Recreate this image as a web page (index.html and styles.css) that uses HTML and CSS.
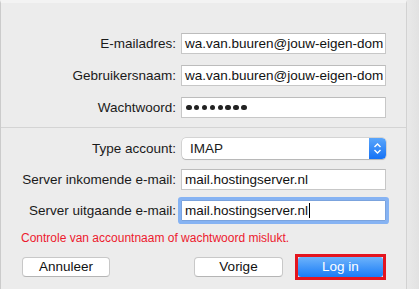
FILE: index.html
```html
<!DOCTYPE html>
<html lang="nl">
<head>
<meta charset="utf-8">
<link rel="stylesheet" href="styles.css">
</head>
<body>
<div class="window">
  <div class="panel">
    <div class="section first">
      <div class="row">
        <div class="label">E-mailadres:</div>
        <div class="field">wa.van.buuren@jouw-eigen-dom</div>
      </div>
      <div class="row">
        <div class="label">Gebruikersnaam:</div>
        <div class="field">wa.van.buuren@jouw-eigen-dom</div>
      </div>
      <div class="row">
        <div class="label">Wachtwoord:</div>
        <div class="field dots">
          <span class="dot"></span><span class="dot"></span><span class="dot"></span><span class="dot"></span><span class="dot"></span><span class="dot"></span><span class="dot"></span><span class="dot"></span>
        </div>
      </div>
    </div>
    <div class="separator"></div>
    <div class="section second">
      <div class="row">
        <div class="label">Type account:</div>
        <div class="select">
          <span class="select-text">IMAP</span>
          <span class="stepper">
            <svg width="9" height="13" viewBox="0 0 9 13"><path d="M1.5 5 L4.5 2 L7.5 5 M1.5 8 L4.5 11 L7.5 8" fill="none" stroke="#fff" stroke-width="1.4"/></svg>
          </span>
        </div>
      </div>
      <div class="row">
        <div class="label">Server inkomende e-mail:</div>
        <div class="field">mail.hostingserver.nl</div>
      </div>
      <div class="row">
        <div class="label">Server uitgaande e-mail:</div>
        <div class="field focused">mail.hostingserver.nl<span class="caret"></span></div>
      </div>
    </div>
    <div class="error">Controle van accountnaam of wachtwoord mislukt.</div>
    <div class="buttons">
      <div class="btn">Annuleer</div>
      <div class="right-group">
        <div class="btn vorige">Vorige</div>
        <div class="highlight"><div class="btn primary">Log in</div></div>
      </div>
    </div>
  </div>
  <div class="side"></div>
</div>
</body>
</html>
```

FILE: styles.css
```css
html, body {
  margin: 0;
  padding: 0;
}
body {
  width: 419px;
  height: 289px;
  overflow: hidden;
  background: #e4e4e4;
  font-family: "Liberation Sans", Arial, sans-serif;
  font-size: 13.5px;
  color: #1a1a1a;
}
.window {
  display: flex;
  height: 289px;
}
.panel {
  width: 407px;
  height: 289px;
  box-sizing: border-box;
  border-left: 1px solid #cbcbcb;
  border-right: 1px solid #d2d2d2;
  border-top: 3px solid #f3f3f3;
  background: #ececec;
  display: flex;
  flex-direction: column;
}
.side {
  flex: 1;
  background: linear-gradient(to right, #e9e9e9, #e2e2e2);
}
.section {
  display: flex;
  flex-direction: column;
}
.section.first {
  padding-top: 30px;
  gap: 11px;
}
.section.second {
  padding-top: 10px;
  gap: 10px;
}
.separator {
  height: 1px;
  background: #d4d4d4;
  margin-top: 9px;
}
.row {
  display: grid;
  grid-template-columns: 175px 205px;
  column-gap: 5px;
  align-items: center;
  height: 21px;
}
.label {
  text-align: right;
  white-space: nowrap;
}
.field {
  box-sizing: border-box;
  height: 21px;
  line-height: 19px;
  background: #fff;
  border: 1px solid #c7c7c7;
  border-top-color: #bcbcbc;
  padding: 0 0 0 3px;
  white-space: nowrap;
  overflow: hidden;
  color: #111;
}
.field.dots {
  display: flex;
  align-items: center;
  gap: 2.4px;
  padding-left: 4px;
}
.dot {
  width: 5.5px;
  height: 5.5px;
  border-radius: 50%;
  background: #222;
}
.field.focused {
  box-shadow: 0 0 0 3px #86b3f3;
  border-radius: 1px;
  border-color: #7ba3dd;
  display: flex;
  align-items: center;
}
.caret {
  display: inline-block;
  width: 1px;
  height: 15px;
  background: #000;
  margin-left: 1px;
}
.select {
  box-sizing: border-box;
  height: 21px;
  margin-left: 1px;
  background: #fff;
  border-radius: 4px;
  box-shadow: 0 0 0 0.5px rgba(0,0,0,0.2), 0 1px 1px rgba(0,0,0,0.15);
  display: flex;
  align-items: center;
  justify-content: space-between;
  overflow: hidden;
}
.select-text {
  padding-left: 8px;
}
.stepper {
  width: 17px;
  height: 21px;
  background: linear-gradient(#5aa6fb, #1672f5);
  border-radius: 0 4px 4px 0;
  display: flex;
  align-items: center;
  justify-content: center;
}
.error {
  margin-top: 10px;
  padding-left: 20px;
  color: #ec1a2e;
  font-size: 12px;
  line-height: 15px;
}
.buttons {
  margin-top: 8px;
  display: flex;
  justify-content: space-between;
  align-items: center;
  padding-left: 21px;
  padding-right: 20px;
}
.right-group {
  display: flex;
  align-items: center;
  gap: 12px;
}
.btn {
  box-sizing: border-box;
  width: 88px;
  height: 20px;
  line-height: 18px;
  text-align: center;
  background: #fff;
  border: 1px solid #c8c8c8;
  border-bottom-color: #b5b5b5;
  border-radius: 4px;
  color: #111;
}
.btn.vorige {
  width: 89px;
}
.highlight {
  border: 3px solid #e4151f;
  padding: 0;
  display: flex;
}
.btn.primary {
  width: 85px;
  border: none;
  line-height: 20px;
  border-radius: 3px;
  color: #fff;
  background: linear-gradient(#6db3fb, #1a7cf7);
}
```
